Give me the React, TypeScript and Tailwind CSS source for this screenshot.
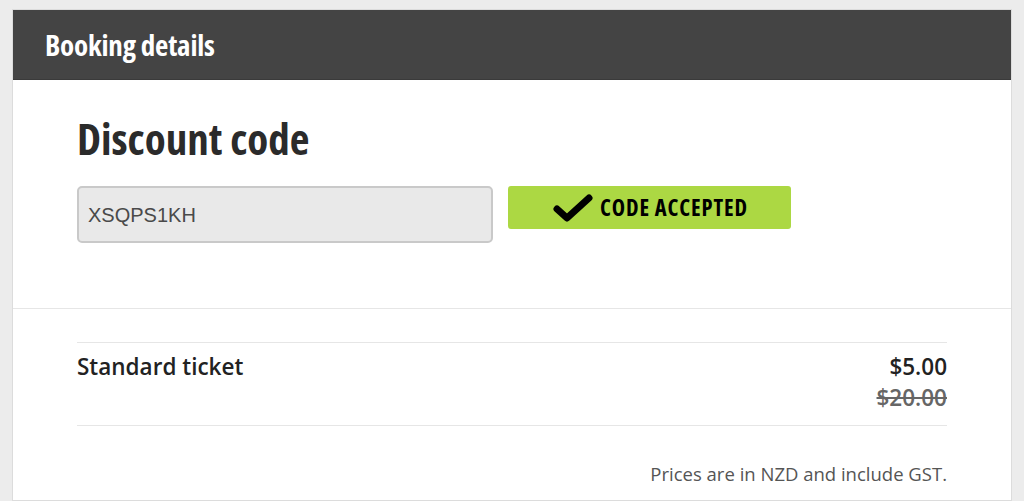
import React from 'react';

const condensed = { fontFamily: '"Open Sans", "DejaVu Sans", sans-serif' };

export default function App() {
  return (
    <div className="min-h-[501px] bg-[#ececec] pt-[9px] px-[12px]" style={{ fontFamily: '"Open Sans", sans-serif' }}>
      <div className="w-[1000px] bg-white border border-[#dcdcdc] min-h-[492px]">
        {/* Header */}
        <div className="h-[70px] bg-[#444444] flex items-center pl-[32px] border-b border-[#3a3a3a]">
          <h2 className="text-white text-[29px] font-bold font-stretch-[75%] tracking-[-0.2px]" style={condensed}>
            Booking details
          </h2>
        </div>

        {/* Discount code */}
        <div className="px-[64px] pt-[33px] pb-[65px] border-b border-[#e6e6e6]">
          <h1 className="text-[#2b2b2b] text-[43px] leading-[51px] font-bold font-stretch-[75%]" style={condensed}>
            Discount code
          </h1>
          <div className="flex items-start gap-[15px] mt-[22px]">
            <div className="w-[416px] h-[57px] bg-[#e9e9e9] border-2 border-[#c9c9c9] rounded-[5px] flex items-center pl-[9px]">
              <span className="text-[#4a4a4a] text-[20px]" style={{ fontFamily: '"Liberation Sans", Arial, sans-serif' }}>
                XSQPS1KH
              </span>
            </div>
            <div className="w-[283px] h-[43px] bg-[#acd843] rounded-[3px] flex items-center justify-center gap-[5px] pl-[2px]">
              <svg width="42" height="30" viewBox="0 0 42 30">
                <path d="M4 16 L14 25 L36 5" fill="none" stroke="#000" strokeWidth="7" strokeLinecap="round" strokeLinejoin="round" />
              </svg>
              <span className="text-black text-[22.5px] font-bold font-stretch-[75%] tracking-[0.9px] uppercase" style={condensed}>
                Code accepted
              </span>
            </div>
          </div>
        </div>

        {/* Tickets */}
        <div className="px-[64px] pt-[33px]">
          <div className="border-t border-b border-[#e6e6e6] flex justify-between pt-[8px] pb-[12px]">
            <div className="text-[#222] text-[22.5px] font-semibold leading-[31px]">Standard ticket</div>
            <div className="text-right">
              <div className="text-[#222] text-[22.5px] font-semibold leading-[31px]">$5.00</div>
              <div className="text-[#666] text-[22.5px] font-semibold leading-[31px] line-through">$20.00</div>
            </div>
          </div>
          <p className="text-right text-[#555] text-[18.5px] mt-[34px]">Prices are in NZD and include GST.</p>
        </div>
      </div>
    </div>
  );
}
